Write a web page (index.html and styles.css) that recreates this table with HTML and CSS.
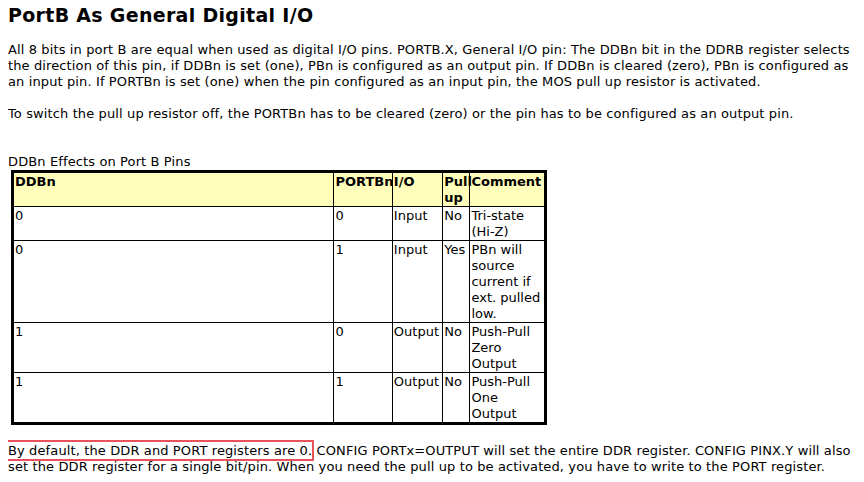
FILE: index.html
```html
<!DOCTYPE html>
<html>
<head>
<meta charset="utf-8">
<link rel="stylesheet" href="styles.css">
</head>
<body>
<h1 class="title">PortB As General Digital I/O</h1>
<p class="para">All 8 bits in port B are equal when used as digital I/O pins. PORTB.X, General I/O pin: The DDBn bit in the DDRB register selects the direction of this pin, if DDBn is set (one), PBn is configured as an output pin. If DDBn is cleared (zero), PBn is configured as an input pin. If PORTBn is set (one) when the pin configured as an input pin, the MOS pull up resistor is activated.</p>
<p class="para">To switch the pull up resistor off, the PORTBn has to be cleared (zero) or the pin has to be configured as an output pin.</p>
<div class="tcap">DDBn Effects on Port B Pins</div>
<table class="pins">
  <colgroup>
    <col class="c1"><col class="c2"><col class="c3"><col class="c4"><col class="c5">
  </colgroup>
  <tr class="head"><th>DDBn</th><th>PORTBn</th><th>I/O</th><th>Pull<br>up</th><th>Comment</th></tr>
  <tr><td>0</td><td>0</td><td>Input</td><td>No</td><td>Tri-state<br>(Hi-Z)</td></tr>
  <tr><td>0</td><td>1</td><td>Input</td><td>Yes</td><td>PBn will<br>source<br>current if<br>ext. pulled<br>low.</td></tr>
  <tr><td>1</td><td>0</td><td>Output</td><td>No</td><td>Push-Pull<br>Zero<br>Output</td></tr>
  <tr><td>1</td><td>1</td><td>Output</td><td>No</td><td>Push-Pull<br>One<br>Output</td></tr>
</table>
<p class="para last"><span class="hl">By default, the DDR and PORT registers are 0.</span> CONFIG PORTx=OUTPUT will set the entire DDR register. CONFIG PINX.Y will also set the DDR register for a single bit/pin. When you need the pull up to be activated, you have to write to the PORT register.</p>
</body>
</html>
```
FILE: styles.css
```css
html, body {
  background: #fff;
}
body {
  margin: 8px;
  font-family: "DejaVu Sans", Verdana, sans-serif;
  font-size: 13px;
  line-height: 16px;
  letter-spacing: 0.12px;
  color: #000;
}
.title {
  font-size: 19px;
  line-height: 16px;
  letter-spacing: 0.3px;
  font-weight: bold;
  margin: -1px 0 19px 0;
}
.para {
  margin: 0 0 16px 0;
}
.tcap {
  margin-top: 32px;
}
.pins {
  border-collapse: collapse;
  border: 3px solid #000;
  margin-left: 3px;
  width: 536px;
  table-layout: fixed;
}
.pins th, .pins td {
  border: 1px solid #000;
  padding: 1px 1px 0 1px;
  text-align: left;
  vertical-align: top;
  font-size: 13px;
  line-height: 16px;
  letter-spacing: 0;
  white-space: nowrap;
}
.pins th {
  font-weight: bold;
  background: #ffffbb;
}
.c1 { width: 319px; }
.c2 { width: 58px; }
.c3 { width: 50px; }
.c4 { width: 27px; }
.c5 { width: 75px; }
.last {
  margin-top: 18px;
}
.hl {
  position: relative;
}
.hl::before {
  content: "";
  position: absolute;
  left: -7px;
  right: -2px;
  top: -3px;
  bottom: -3px;
  border: 2px solid #e8525a;
}
```
